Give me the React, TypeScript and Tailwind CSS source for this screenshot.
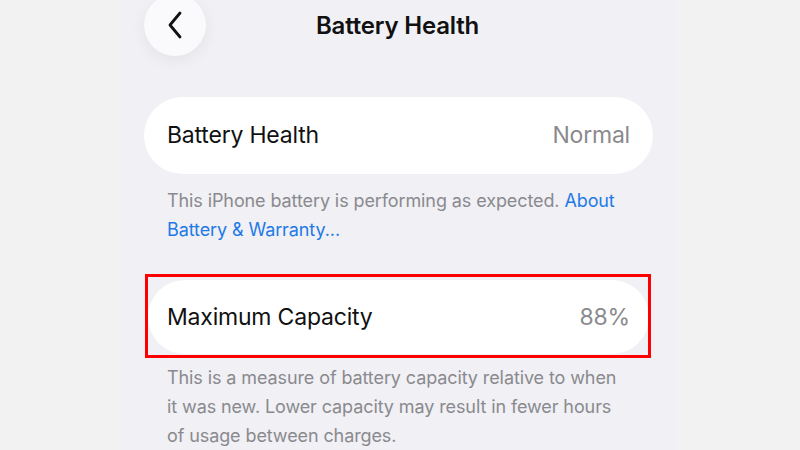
import React from "react";

export default function App() {
  return (
    <div className="w-[800px] h-[450px] overflow-hidden bg-[#f2f2f2] flex" style={{ fontFamily: "Inter, 'Noto Sans', sans-serif" }}>
      <div className="w-[555px] ml-[121px] h-full bg-[#f0f0f5] flex flex-col px-[23px]">
        <div className="h-[56px] -mt-[6px] relative flex items-center justify-center">
          <div className="absolute left-0 top-0 w-[62px] h-[62px] rounded-full bg-[#fafafc] shadow-[0_4px_16px_rgba(0,0,0,0.06)] flex items-center justify-center">
            <svg width="16" height="28" viewBox="0 0 16 28" fill="none">
              <path d="M13 2 L3 14 L13 26" stroke="#111" strokeWidth="2.8" strokeLinecap="round" strokeLinejoin="round" />
            </svg>
          </div>
          <div className="text-[24px] font-semibold text-[#111] mt-[7px] ml-[-2px] tracking-[-0.2px]">Battery Health</div>
        </div>
        <div className="mt-[47px] h-[77px] rounded-full bg-white flex items-center justify-between px-[23px]">
          <span className="text-[23px] text-[#111] tracking-[-0.2px]">Battery Health</span>
          <span className="text-[23px] text-[#8a8a8e] tracking-[-0.2px]">Normal</span>
        </div>
        <div className="mt-[12px] px-[23px] text-[18px] leading-[29px] text-[#8a8a8e] tracking-[-0.1px]">
          <span>This iPhone battery is performing as expected.</span> <span className="text-[#1f7ae6]">About Battery &amp; Warranty...</span>
        </div>
        <div className="mt-[36px] relative">
          <div className="h-[74px] mx-[4px] rounded-full bg-white flex items-center justify-between px-[19px]">
            <span className="text-[23px] text-[#111] tracking-[-0.2px]">Maximum Capacity</span>
            <span className="text-[23px] text-[#8a8a8e] tracking-[-0.2px]">88%</span>
          </div>
          <div className="absolute left-[1px] right-[2px] -top-[6px] -bottom-[4px] border-[3px] border-[#ff0000]" />
        </div>
        <div className="mt-[9px] px-[23px] text-[18px] leading-[29px] text-[#8a8a8e] tracking-[-0.1px]">
          This is a measure of battery capacity relative to when it was new. Lower capacity may result in fewer hours of usage between charges.
        </div>
      </div>
    </div>
  );
}
